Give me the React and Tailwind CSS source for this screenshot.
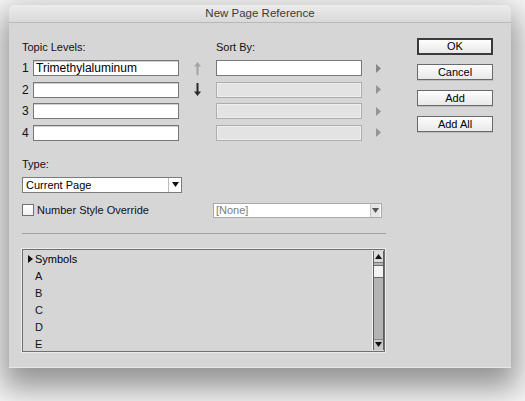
import React from "react";

const font = { fontFamily: '"Liberation Sans", Arial, sans-serif' };

function UpArrow({ color }) {
  return (
    <svg width="7" height="13" viewBox="0 0 7 13">
      <path d="M3.5 0 L7 4.5 L4.5 4.5 L4.5 13 L2.5 13 L2.5 4.5 L0 4.5 Z" fill={color} />
    </svg>
  );
}

function DownArrow({ color }) {
  return (
    <svg width="7" height="13" viewBox="0 0 7 13">
      <path d="M3.5 13 L7 8.5 L4.5 8.5 L4.5 0 L2.5 0 L2.5 8.5 L0 8.5 Z" fill={color} />
    </svg>
  );
}

function RightTri({ color = "#8c8c8c", w = 5, h = 9 }) {
  return (
    <svg width={w} height={h} viewBox={`0 0 ${w} ${h}`}>
      <path d={`M0 0 L${w} ${h / 2} L0 ${h} Z`} fill={color} />
    </svg>
  );
}

function DownTri({ color = "#111" }) {
  return (
    <svg width="7" height="5" viewBox="0 0 7 5">
      <path d="M0 0 L7 0 L3.5 5 Z" fill={color} />
    </svg>
  );
}

function UpTri({ color = "#111" }) {
  return (
    <svg width="7" height="5" viewBox="0 0 7 5">
      <path d="M0 5 L7 5 L3.5 0 Z" fill={color} />
    </svg>
  );
}

const rows = [
  { n: "1", value: "Trimethylaluminum", sortOn: true },
  { n: "2", value: "", sortOn: false },
  { n: "3", value: "", sortOn: false },
  { n: "4", value: "", sortOn: false },
];

function MacButton({ label, primary }) {
  return (
    <div
      className={
        "w-[76px] flex items-center justify-center text-[11px] leading-none text-black bg-gradient-to-b from-[#fdfdfd] to-[#e9e9e9] " +
        (primary ? "h-[17px] border-2 border-[#3b3b3b]" : "h-[16px] border border-[#6a6a6a] shadow-[0_1px_0_#bdbdbd]")
      }
    >
      {label}
    </div>
  );
}

export default function App() {
  return (
    <div className="w-[525px] h-[401px] overflow-hidden bg-[#f5f5f5] pt-[5px] pl-[9px]" style={font}>
      <div className="w-[502px] h-[363px] bg-[#d6d6d6] rounded-t-[5px] flex flex-col shadow-[0_14px_30px_6px_rgba(0,0,0,0.4)] border-b border-[#e8e8e8]">
        {/* title bar */}
        <div className="h-[18px] rounded-t-[5px] bg-gradient-to-b from-[#ececec] to-[#d9d9d9] border-b border-[#b9b9b9] flex items-center justify-center text-[11.5px] text-[#3a3a3a]">
          New Page Reference
        </div>

        <div className="flex">
          {/* left column */}
          <div className="ml-[13px] w-[364px] flex flex-col">
            <div className="mt-[18px] flex h-[13px] items-center text-[11px] text-[#111]">
              <div className="w-[194px]">Topic Levels:</div>
              <div>Sort By:</div>
            </div>

            <div className="mt-[6px] flex flex-col gap-[5.67px]">
              {rows.map((r, i) => (
                <div key={r.n} className="flex items-center h-[16px]">
                  <div className="w-[11px] text-[12px] text-[#111]">{r.n}</div>
                  <div className="w-[146px] h-[16px] bg-white border border-[#777] shadow-[inset_0_1px_0_#cfcfcf] text-[12px] leading-[14px] pl-[2px] text-black">
                    {r.value}
                  </div>
                  <div className="w-[37px] flex justify-center">
                    {i === 0 && <UpArrow color="#a3a3a3" />}
                    {i === 1 && <DownArrow color="#2a2a2a" />}
                  </div>
                  <div
                    className={
                      "w-[146px] h-[16px] border " +
                      (r.sortOn ? "bg-white border-[#777]" : "bg-[#e3e3e3] border-[#adadad] shadow-[inset_0_0_0_1px_#eeeeee]")
                    }
                  />
                  <div className="ml-[14px] flex items-center">
                    <RightTri color={r.sortOn ? "#878787" : "#949494"} />
                  </div>
                </div>
              ))}
            </div>

            <div className="mt-[16.5px] h-[13px] flex items-center text-[11px] text-[#111]">Type:</div>

            <div className="mt-[6.5px] w-[160px] h-[16px] bg-white border border-[#7a7a7a] flex items-center">
              <div className="flex-1 text-[11px] pl-[3px] text-black">Current Page</div>
              <div className="w-[13px] h-full border-l border-[#bcbcbc] flex items-center justify-center">
                <DownTri color="#111" />
              </div>
            </div>

            <div className="mt-[10px] h-[15px] flex items-center">
              <div className="w-[191px] flex items-center">
                <div className="w-[12px] h-[12px] bg-gradient-to-b from-white to-[#f0f0f0] border border-[#6f6f6f]" />
                <div className="ml-[3px] text-[11px] text-[#111]">Number Style Override</div>
              </div>
              <div className="w-[169px] h-[15px] bg-white border border-[#a9a9a9] flex items-center">
                <div className="flex-1 text-[11px] pl-[2px] text-[#7d7d7d]">[None]</div>
                <div className="w-[10px] h-[13px] mr-[1px] bg-[#e6e6e6] border-l border-[#c4c4c4] flex items-center justify-center">
                  <DownTri color="#555" />
                </div>
              </div>
            </div>

            <div className="mt-[15px] h-[1px] w-[364px] bg-[#a2a2a2]" />

            {/* list */}
            <div className="mt-[15px] w-[363px] h-[103px] border border-[#6f6f6f] shadow-[0_0_0_1px_#ececec] flex">
              <div className="flex-1 overflow-hidden pt-[0.5px] text-[11px] text-black border-r border-[#f4f4f4]">
                <div className="h-[17px] flex items-center pl-[5px]">
                  <RightTri color="#111" w={5} h={8} />
                  <span className="ml-[2px]">Symbols</span>
                </div>
                {["A", "B", "C", "D", "E"].map((l) => (
                  <div key={l} className="h-[17px] flex items-center pl-[12px] text-[#111]">
                    {l}
                  </div>
                ))}
              </div>
              <div className="w-[11px] my-[1px] bg-[#b4b4b4] border-x border-[#5e5e5e] flex flex-col">
                <div className="h-[12px] bg-[#dcdcdc] border-b border-[#7a7a7a] flex items-center justify-center">
                  <UpTri color="#111" />
                </div>
                <div className="mt-[2px] h-[13px] bg-[#f4f4f4] border-y border-[#6a6a6a]" />
                <div className="flex-1" />
                <div className="h-[11px] bg-[#c8c8c8] border-t border-[#8a8a8a] flex items-center justify-center">
                  <DownTri color="#111" />
                </div>
              </div>
            </div>
          </div>

          {/* right column */}
          <div className="ml-[31px] mt-[15px] flex flex-col">
            <MacButton label="OK" primary />
            <div className="mt-[9px]">
              <MacButton label="Cancel" />
            </div>
            <div className="mt-[10px]">
              <MacButton label="Add" />
            </div>
            <div className="mt-[10px]">
              <MacButton label="Add All" />
            </div>
          </div>
        </div>
      </div>
    </div>
  );
}
